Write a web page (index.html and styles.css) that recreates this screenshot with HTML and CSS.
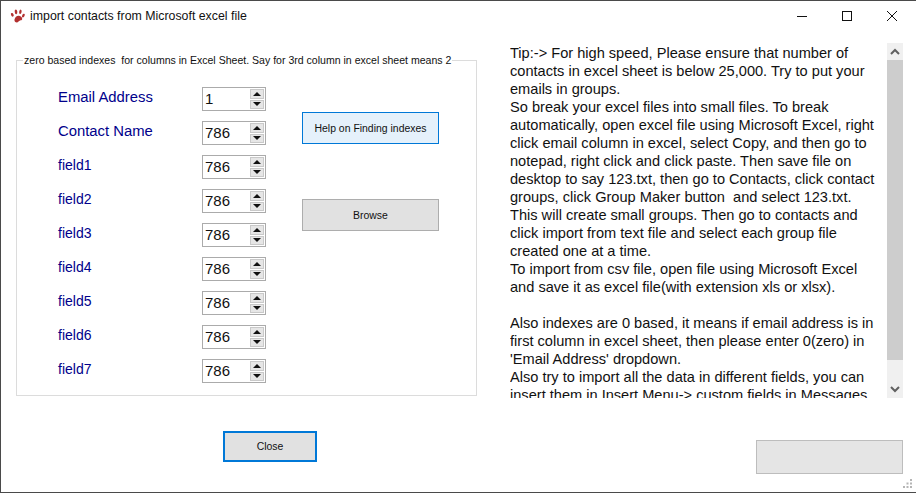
FILE: index.html
```html
<!DOCTYPE html>
<html lang="en">
<head>
<meta charset="utf-8">
<title>import contacts from Microsoft excel file</title>
<link rel="stylesheet" href="styles.css">
</head>
<body>
<div class="window">
  <header class="titlebar">
    <svg class="app-icon" width="16" height="16" viewBox="0 0 16 16"><g fill="#b2302f"><path d="M4.500 11.500C5 9 7 7.500 9 7.800c2 .3 3.500 1.800 3.200 3.500-.2 1-1.200 1-2.200 1.200-1.200.3-1.700 2-3.200 2-1.300 0-2.700-1.300-2.300-3z"/><ellipse cx="2.300" cy="6.800" rx="1.300" ry="1.900" transform="rotate(-25 2.300 6.800)"/><ellipse cx="6" cy="3.800" rx="1.300" ry="2.400" transform="rotate(-8 6 3.800)"/><ellipse cx="10.400" cy="3.800" rx="1.200" ry="2.200" transform="rotate(12 10.400 3.800)"/><ellipse cx="13.400" cy="7.600" rx="1.200" ry="2" transform="rotate(25 13.400 7.600)"/></g></svg>
    <span class="title">import contacts from Microsoft excel file</span>
    <div class="win-controls">
      <svg class="win-btn" width="45" height="30" viewBox="0 0 45 30"><path d="M17 15.500h10" stroke="#111" fill="none"/></svg>
      <svg class="win-btn" width="45" height="30" viewBox="0 0 45 30"><rect x="17.500" y="10.500" width="9" height="9" stroke="#111" fill="none"/></svg>
      <svg class="win-btn" width="45" height="30" viewBox="0 0 45 30"><path d="M17 10l10 10M27 10L17 20" stroke="#111" fill="none"/></svg>
    </div>
  </header>
  <main class="content">
    <section class="left">
      <fieldset class="group">
        <span class="legend">zero based indexes&nbsp; for columns in Excel Sheet. Say for 3rd column in excel sheet means 2</span>
        <div class="form">
          <div class="rows">
            <div class="row"><span class="label large">Email Address</span><div class="spinner"><span class="value">1</span><span class="arrows"><span class="arrow up"></span><span class="arrow down"></span></span></div></div>
            <div class="row"><span class="label large">Contact Name</span><div class="spinner"><span class="value">786</span><span class="arrows"><span class="arrow up"></span><span class="arrow down"></span></span></div></div>
            <div class="row"><span class="label">field1</span><div class="spinner"><span class="value">786</span><span class="arrows"><span class="arrow up"></span><span class="arrow down"></span></span></div></div>
            <div class="row"><span class="label">field2</span><div class="spinner"><span class="value">786</span><span class="arrows"><span class="arrow up"></span><span class="arrow down"></span></span></div></div>
            <div class="row"><span class="label">field3</span><div class="spinner"><span class="value">786</span><span class="arrows"><span class="arrow up"></span><span class="arrow down"></span></span></div></div>
            <div class="row"><span class="label">field4</span><div class="spinner"><span class="value">786</span><span class="arrows"><span class="arrow up"></span><span class="arrow down"></span></span></div></div>
            <div class="row"><span class="label">field5</span><div class="spinner"><span class="value">786</span><span class="arrows"><span class="arrow up"></span><span class="arrow down"></span></span></div></div>
            <div class="row"><span class="label">field6</span><div class="spinner"><span class="value">786</span><span class="arrows"><span class="arrow up"></span><span class="arrow down"></span></span></div></div>
            <div class="row"><span class="label">field7</span><div class="spinner"><span class="value">786</span><span class="arrows"><span class="arrow up"></span><span class="arrow down"></span></span></div></div>
          </div>
          <div class="actions">
            <button class="btn btn-help">Help on Finding indexes</button>
            <button class="btn btn-browse">Browse</button>
          </div>
        </div>
      </fieldset>
      <button class="btn btn-close">Close</button>
    </section>
    <section class="right">
      <div class="tip">
        <div class="tip-text">Tip:-&gt; For high speed, Please ensure that number of<br>
contacts in excel sheet is below 25,000. Try to put your<br>
emails in groups.<br>
So break your excel files into small files. To break<br>
automatically, open excel file using Microsoft Excel, right<br>
click email column in excel, select Copy, and then go to<br>
notepad, right click and click paste. Then save file on<br>
desktop to say 123.txt, then go to Contacts, click contact<br>
groups, click Group Maker button&nbsp; and select 123.txt.<br>
This will create small groups. Then go to contacts and<br>
click import from text file and select each group file<br>
created one at a time.<br>
To import from csv file, open file using Microsoft Excel<br>
and save it as excel file(with extension xls or xlsx).<br>
<br>
Also indexes are 0 based, it means if email address is in<br>
first column in excel sheet, then please enter 0(zero) in<br>
'Email Address' dropdown.<br>
Also try to import all the data in different fields, you can<br>
insert them in Insert Menu-&gt; custom fields in Messages</div>
        <div class="scrollbar">
          <svg class="sb-arrow" width="16" height="17" viewBox="0 0 16 17"><path d="M4 11l4-4 4 4" stroke="#606060" stroke-width="2" fill="none"/></svg>
          <div class="sb-thumb"></div>
          <svg class="sb-arrow sb-bottom" width="16" height="17" viewBox="0 0 16 17"><path d="M4 6l4 4 4-4" stroke="#606060" stroke-width="2" fill="none"/></svg>
        </div>
      </div>
      <div class="blank-btn"></div>
    </section>
  </main>
  <svg class="grip" width="10" height="10" viewBox="0 0 10 10"><path d="M7 0h2v2H7zM3.500 3.500h2v2h-2zM7 3.500h2v2H7zM0 7h2v2H0zM3.500 7h2v2h-2zM7 7h2v2H7z" fill="#b5b5b5"/></svg>
</div>
</body>
</html>
```
FILE: styles.css
```css
html, body {
  margin: 0;
  padding: 0;
  background: #fff;
}
body {
  font-family: "Liberation Sans", Arial, sans-serif;
  overflow: hidden;
}
.window {
  position: relative;
  width: 916px;
  height: 493px;
  box-sizing: border-box;
  border-top: 1px solid #4a4a4a;
  border-left: 1px solid #4a4a4a;
  border-bottom: 1px solid #4a4a4a;
  background: #fff;
  overflow: hidden;
}
.titlebar {
  display: flex;
  align-items: center;
  height: 29px;
  padding-left: 9px;
}
.app-icon { flex: none; }
.title {
  margin-left: 4px;
  font-size: 12.35px;
  color: #111;
  white-space: nowrap;
}
.win-controls {
  display: flex;
  margin-left: auto;
  margin-right: 1px;
}
.win-btn { display: block; }
.content {
  display: flex;
  align-items: flex-start;
}
.left {
  display: flex;
  flex-direction: column;
  align-items: flex-start;
  width: 461px;
  margin-left: 15px;
  padding-top: 30px;
}
.group {
  position: relative;
  box-sizing: border-box;
  width: 461px;
  height: 336px;
  margin: 0;
  padding: 0;
  border: 1px solid #dcdcdc;
}
.legend {
  position: absolute;
  left: 6px;
  top: -7px;
  padding: 0 1px;
  background: #fff;
  font-size: 10.56px;
  line-height: 13px;
  color: #111;
  white-space: nowrap;
}
.form {
  display: flex;
  padding: 26px 0 0 41px;
}
.rows {
  display: flex;
  flex-direction: column;
  gap: 10px;
}
.row {
  display: flex;
  align-items: flex-start;
  height: 24px;
}
.label {
  width: 144px;
  padding-top: 1px;
  font-size: 14px;
  line-height: 18px;
  color: #00008b;
  white-space: nowrap;
}
.label.large { font-size: 14.85px; }
.spinner {
  display: flex;
  justify-content: space-between;
  box-sizing: border-box;
  width: 64px;
  height: 24px;
  border: 1px solid #ababab;
  background: #fff;
}
.value {
  padding: 2px 0 0 2px;
  font-size: 15px;
  line-height: 18px;
  color: #111;
}
.arrows {
  display: flex;
  flex-direction: column;
  gap: 1px;
  width: 14px;
  margin: 1px 1px 1px 0;
}
.arrow {
  flex: 1;
  display: flex;
  align-items: center;
  justify-content: center;
  background: #e6e6e6;
  border: 1px solid #c9c9c9;
}
.arrow::after {
  content: "";
  border-left: 4px solid transparent;
  border-right: 4px solid transparent;
}
.arrow.up::after { border-bottom: 4px solid #111; }
.arrow.down::after { border-top: 4px solid #111; }
.actions {
  display: flex;
  flex-direction: column;
  gap: 55px;
  margin-left: 36px;
  padding-top: 25px;
}
.btn {
  display: block;
  box-sizing: border-box;
  margin: 0;
  padding: 0;
  font-family: "Liberation Sans", Arial, sans-serif;
  font-size: 10.45px;
  color: #111;
  background: #e1e1e1;
  border: 1px solid #adadad;
  border-radius: 0;
}
.btn-help {
  width: 137px;
  height: 32px;
  background: #e5f1fb;
  border-color: #0078d7;
}
.btn-browse {
  width: 137px;
  height: 32px;
}
.btn-close {
  width: 94px;
  height: 31px;
  margin: 35px 0 0 207px;
  border: 2px solid #0078d7;
}
.right {
  display: flex;
  flex-direction: column;
  align-items: flex-end;
  width: 393px;
  margin-left: 33px;
  padding-top: 13px;
}
.tip {
  display: flex;
  justify-content: space-between;
  width: 393px;
  height: 355px;
  overflow: hidden;
}
.tip-text {
  font-size: 14.6px;
  line-height: 18px;
  color: #111;
  white-space: nowrap;
  padding-top: 1px;
}
.scrollbar {
  display: flex;
  flex-direction: column;
  flex: none;
  width: 16px;
  height: 355px;
  background: #f0f0f0;
}
.sb-arrow { display: block; flex: none; }
.sb-thumb {
  height: 300px;
  background: #cdcdcd;
}
.sb-bottom { margin-top: auto; }
.blank-btn {
  box-sizing: border-box;
  width: 147px;
  height: 34px;
  margin-top: 42px;
  background: #e5e5e5;
  border: 1px solid #bdbdbd;
}
.grip {
  position: absolute;
  right: 3px;
  bottom: 3px;
}
```
